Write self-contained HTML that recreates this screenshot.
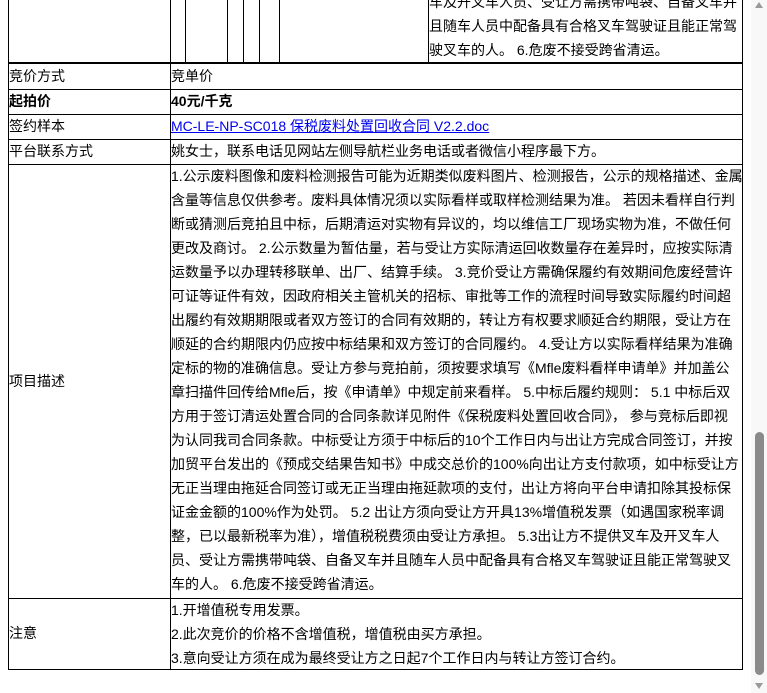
<!DOCTYPE html>
<html><head><meta charset="utf-8"><style>
body{margin:0;width:767px;height:693px;overflow:hidden;background:#fff;font-family:"Liberation Sans","Noto Sans CJK SC",sans-serif;font-size:14px;color:#000;position:relative}
.h{position:absolute;background:#000;height:1px}
.v{position:absolute;background:#000;width:1px}
.t{position:absolute;white-space:nowrap;line-height:24px}
a{color:#0000ee;text-decoration:underline}
</style></head><body>
<!-- top partial row -->
<div class="v" style="left:8px;top:0;height:670px"></div>
<div class="v" style="left:742px;top:0;height:670px"></div>
<div class="v" style="left:170px;top:0;height:670px"></div>
<div class="v" style="left:185px;top:0;height:63px"></div>
<div class="v" style="left:227px;top:0;height:63px"></div>
<div class="v" style="left:243px;top:0;height:63px"></div>
<div class="v" style="left:259px;top:0;height:63px"></div>
<div class="v" style="left:279px;top:0;height:63px"></div>
<div class="v" style="left:428px;top:0;height:63px"></div>
<div class="h" style="left:8px;width:735px;top:62px;height:2px"></div>
<div class="t" style="left:429px;top:-10px">车及开叉车人员、受让方需携带吨袋、自备叉车并<br>且随车人员中配备具有合格叉车驾驶证且能正常驾<br>驶叉车的人。 6.危废不接受跨省清运。</div>
<div class="h" style="left:8px;width:735px;top:89px"></div>
<div class="h" style="left:8px;width:735px;top:114px"></div>
<div class="h" style="left:8px;width:735px;top:139px"></div>
<div class="h" style="left:8px;width:735px;top:164px"></div>
<div class="h" style="left:8px;width:735px;top:598px"></div>
<div class="h" style="left:8px;width:735px;top:669px"></div>
<div class="t" style="left:9px;top:64px">竞价方式</div><div class="t" style="left:171px;top:64px">竞单价</div>
<div class="t" style="left:9px;top:89px;font-weight:bold">起拍价</div><div class="t" style="left:171px;top:89px;font-weight:bold">40元/千克</div>
<div class="t" style="left:9px;top:114px">签约样本</div><div class="t" style="left:171px;top:114px"><a>MC-LE-NP-SC018 保税废料处置回收合同 V2.2.doc</a></div>
<div class="t" style="left:9px;top:139px">平台联系方式</div><div class="t" style="left:171px;top:139px">姚女士，联系电话见网站左侧导航栏业务电话或者微信小程序最下方。</div>
<div class="t" style="left:9px;top:369px">项目描述</div>
<div class="t" style="left:171px;top:164px">1.公示废料图像和废料检测报告可能为近期类似废料图片、检测报告，公示的规格描述、金属<br>含量等信息仅供参考。废料具体情况须以实际看样或取样检测结果为准。 若因未看样自行判<br>断或猜测后竞拍且中标，后期清运对实物有异议的，均以维信工厂现场实物为准，不做任何<br>更改及商讨。 2.公示数量为暂估量，若与受让方实际清运回收数量存在差异时，应按实际清<br>运数量予以办理转移联单、出厂、结算手续。 3.竞价受让方需确保履约有效期间危废经营许<br>可证等证件有效，因政府相关主管机关的招标、审批等工作的流程时间导致实际履约时间超<br>出履约有效期期限或者双方签订的合同有效期的，转让方有权要求顺延合约期限，受让方在<br>顺延的合约期限内仍应按中标结果和双方签订的合同履约。 4.受让方以实际看样结果为准确<br>定标的物的准确信息。受让方参与竞拍前，须按要求填写《Mfle废料看样申请单》并加盖公<br>章扫描件回传给Mfle后，按《申请单》中规定前来看样。 5.中标后履约规则： 5.1 中标后双<br>方用于签订清运处置合同的合同条款详见附件《保税废料处置回收合同》， 参与竞标后即视<br>为认同我司合同条款。中标受让方须于中标后的10个工作日内与出让方完成合同签订，并按<br>加贸平台发出的《预成交结果告知书》中成交总价的100%向出让方支付款项，如中标受让方<br>无正当理由拖延合同签订或无正当理由拖延款项的支付，出让方将向平台申请扣除其投标保<br>证金金额的100%作为处罚。 5.2 出让方须向受让方开具13%增值税发票（如遇国家税率调<br>整，已以最新税率为准），增值税税费须由受让方承担。 5.3出让方不提供叉车及开叉车人<br>员、受让方需携带吨袋、自备叉车并且随车人员中配备具有合格叉车驾驶证且能正常驾驶叉<br>车的人。 6.危废不接受跨省清运。</div>
<div class="t" style="left:9px;top:621px">注意</div>
<div class="t" style="left:171px;top:598px">1.开增值税专用发票。<br>2.此次竞价的价格不含增值税，增值税由买方承担。<br>3.意向受让方须在成为最终受让方之日起7个工作日内与转让方签订合约。</div>
<!-- scrollbar -->
<div style="position:absolute;left:751px;top:0;width:16px;height:693px;background:#f8f8f8"></div>
<div style="position:absolute;left:755px;top:2px;width:0;height:0;border-left:4px solid transparent;border-right:4px solid transparent;border-bottom:6px solid #999"></div>
<div style="position:absolute;left:755px;top:432px;width:9px;height:243px;background:#8a8a8a;border-radius:5px"></div>
<div style="position:absolute;left:755px;top:683px;width:0;height:0;border-left:4px solid transparent;border-right:4px solid transparent;border-top:6px solid #999"></div>
</body></html>
